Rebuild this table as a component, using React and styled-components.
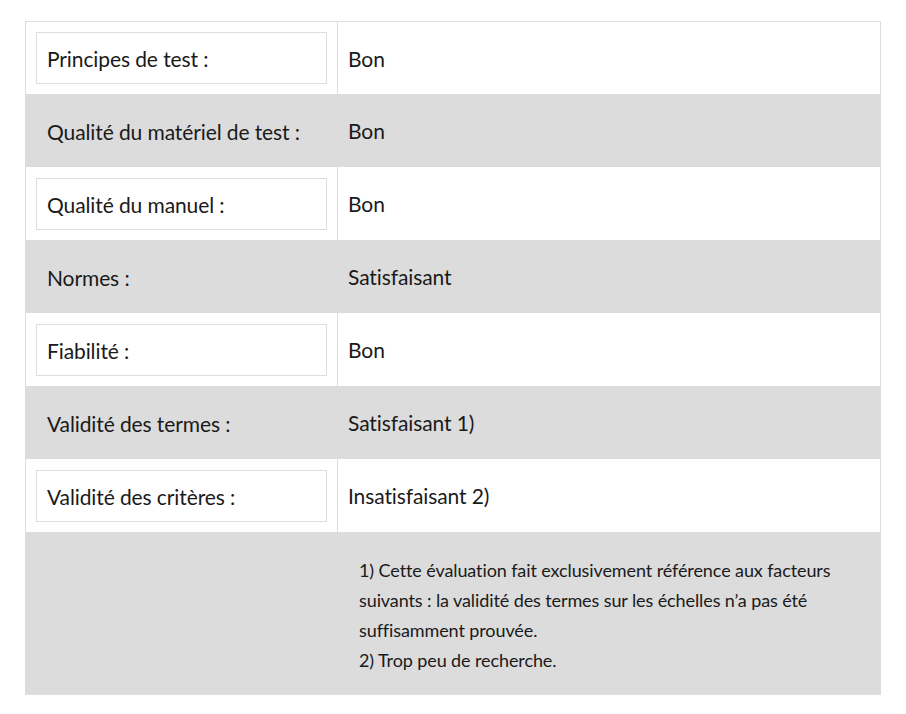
import styled, { createGlobalStyle } from 'styled-components';

const GlobalStyle = createGlobalStyle`
  body {
    margin: 0;
    background: #fff;
    font-family: Lato, 'Open Sans', sans-serif;
    color: #1a1a1a;
  }
`;

const rows = [
  { label: 'Principes de test :', value: 'Bon' },
  { label: 'Qualité du matériel de test :', value: 'Bon' },
  { label: 'Qualité du manuel :', value: 'Bon' },
  { label: 'Normes :', value: 'Satisfaisant' },
  { label: 'Fiabilité :', value: 'Bon' },
  { label: 'Validité des termes :', value: 'Satisfaisant 1)' },
  { label: 'Validité des critères :', value: 'Insatisfaisant 2)' },
];

const App = () => (
  <>
    <GlobalStyle />
    <Page>
      <Table>
        <tbody>
          {rows.map((row, i) => (
            <Row key={row.label} $shaded={i % 2 === 1}>
              <LabelCell $shaded={i % 2 === 1}>
                <LabelBox $shaded={i % 2 === 1}>{row.label}</LabelBox>
              </LabelCell>
              <ValueCell $shaded={i % 2 === 1}>{row.value}</ValueCell>
            </Row>
          ))}
          <Row $shaded>
            <LabelCell $shaded />
            <ValueCell $shaded>
              <Notes>
                1) Cette évaluation fait exclusivement référence aux facteurs
                suivants : la validité des termes sur les échelles n’a pas été
                suffisamment prouvée.
                <br />
                2) Trop peu de recherche.
              </Notes>
            </ValueCell>
          </Row>
        </tbody>
      </Table>
    </Page>
  </>
);

const Page = styled.div`
  padding: 21px 25px;
`;

const Table = styled.table`
  width: 856px;
  border-collapse: collapse;
  border: 1px solid #dddddd;
`;

const Row = styled.tr`
  background: ${({ $shaded }) => ($shaded ? '#dcdcdc' : '#fff')};

  &:first-child td {
    padding-top: 10px;
  }
`;

const LabelCell = styled.td`
  width: 291px;
  padding: 11px 10px 10px;
  border-right: 1px solid ${({ $shaded }) => ($shaded ? '#dcdcdc' : '#dddddd')};
  vertical-align: middle;
`;

const LabelBox = styled.div`
  box-sizing: border-box;
  height: 52px;
  display: flex;
  align-items: center;
  padding: 0 10px;
  border: 1px solid ${({ $shaded }) => ($shaded ? '#dcdcdc' : '#dddddd')};
  font-size: 21px;
  letter-spacing: -0.1px;
`;

const ValueCell = styled.td`
  padding: 10px;
  font-size: 21px;
  letter-spacing: -0.1px;
  vertical-align: middle;
`;

const Notes = styled.p`
  margin: 0;
  padding: 13px 30px 9px 11px;
  font-size: 18px;
  line-height: 30px;
`;

export default App;
